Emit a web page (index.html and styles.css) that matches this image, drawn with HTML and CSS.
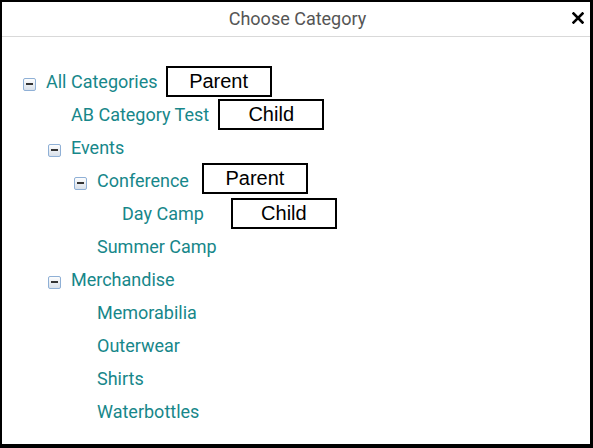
FILE: index.html
```html
<!DOCTYPE html>
<html lang="en">
<head>
    <meta charset="UTF-8">
    <meta name="viewport" content="width=device-width, initial-scale=1.0">
    <title>Choose Category</title>
    <link rel="stylesheet" href="styles.css">
</head>
<body>

    <div class="dialog">
        <div class="dialog-header">
            <span class="title">Choose Category</span>
            <span class="close">
                <svg width="12" height="12" viewBox="0 0 12 12"><path d="M1.5 1.5 L10.5 10.5 M10.5 1.5 L1.5 10.5" stroke="#000" stroke-width="2.6" stroke-linecap="square"/></svg>
            </span>
        </div>

        <!-- Category tree -->
        <ul class="tree">
            <li class="node lvl0"><span class="toggle"></span><a href="#">All Categories</a><span class="tag tag-1">Parent</span></li>
            <li class="node lvl1"><span class="toggle leaf"></span><a href="#">AB Category Test</a><span class="tag tag-2">Child</span></li>
            <li class="node lvl1"><span class="toggle"></span><a href="#">Events</a></li>
            <li class="node lvl2"><span class="toggle"></span><a href="#">Conference</a><span class="tag tag-3">Parent</span></li>
            <li class="node lvl3"><span class="toggle leaf"></span><a href="#">Day Camp</a><span class="tag tag-4">Child</span></li>
            <li class="node lvl2"><span class="toggle leaf"></span><a href="#">Summer Camp</a></li>
            <li class="node lvl1"><span class="toggle"></span><a href="#">Merchandise</a></li>
            <li class="node lvl2"><span class="toggle leaf"></span><a href="#">Memorabilia</a></li>
            <li class="node lvl2"><span class="toggle leaf"></span><a href="#">Outerwear</a></li>
            <li class="node lvl2"><span class="toggle leaf"></span><a href="#">Shirts</a></li>
            <li class="node lvl2"><span class="toggle leaf"></span><a href="#">Waterbottles</a></li>
        </ul>
    </div>

</body>
</html>
```

FILE: styles.css
```css
html, body { margin: 0; padding: 0; background: #fff; }
body { font-family: Roboto, "Noto Sans", sans-serif; }

.dialog {
    width: 593px;
    height: 448px;
    box-sizing: border-box;
    border: 2px solid #000;
    border-right-width: 3px;
    border-bottom-width: 4px;
    background: #fff;
}

.dialog-header {
    height: 34px;
    border-bottom: 1px solid #d9d9d9;
    display: flex;
    align-items: center;
    justify-content: center;
    position: relative;
}
.title { font-size: 18px; color: #555; padding-left: 3px; margin-top: -1px; }
.close { position: absolute; right: 6px; top: 10px; line-height: 0; }

.tree { list-style: none; margin: 0; padding: 28px 0 0 0; }
.node { height: 33px; display: flex; align-items: center; }
.node a { color: #17878a; text-decoration: none; font-size: 18px; }

.lvl0 { padding-left: 21px; }
.lvl1 { padding-left: 46px; }
.lvl2 { padding-left: 72px; }
.lvl3 { padding-left: 97px; }

.toggle {
    width: 13px;
    height: 13px;
    box-sizing: border-box;
    margin-right: 10px;
    margin-top: 5px;
    border: 1px solid #8fb0d6;
    border-radius: 2px;
    background: linear-gradient(#fdfdfd, #d8e0ea);
    position: relative;
}
.toggle::after {
    content: "";
    position: absolute;
    left: 2px;
    right: 2px;
    top: 4px;
    height: 2px;
    background: #333;
}
.toggle.leaf { visibility: hidden; }

.tag {
    width: 106px;
    height: 31px;
    box-sizing: border-box;
    border: 2px solid #000;
    font-family: "Liberation Sans", Arial, sans-serif;
    font-size: 20px;
    color: #000;
    display: flex;
    align-items: center;
    justify-content: center;
}
.tag-1 { margin-left: 8px; }
.tag-2 { margin-left: 9px; }
.tag-3 { margin-left: 13px; margin-top: -4px; }
.tag-4 { margin-left: 27px; }
```
